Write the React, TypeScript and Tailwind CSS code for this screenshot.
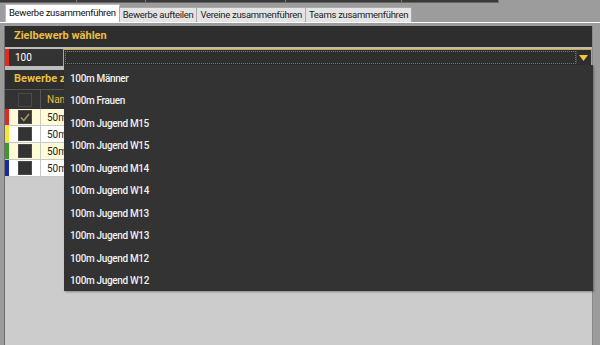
import React from "react";

const tabs = ["Bewerbe zusammenführen", "Bewerbe aufteilen", "Vereine zusammenführen", "Teams zusammenführen"];

const options = [
  "100m Männer",
  "100m Frauen",
  "100m Jugend M15",
  "100m Jugend W15",
  "100m Jugend M14",
  "100m Jugend W14",
  "100m Jugend M13",
  "100m Jugend W13",
  "100m Jugend M12",
  "100m Jugend W12",
];

const rows = [
  { color: "bg-[#e8281e]", bg: "bg-[#fffbd6]", checked: true },
  { color: "bg-[#f5e82a]", bg: "bg-white", checked: false },
  { color: "bg-[#3c9a2a]", bg: "bg-[#fffbd6]", checked: false },
  { color: "bg-[#1a2a9a]", bg: "bg-white", checked: false },
];

function Box({ checked }: { checked?: boolean }) {
  return (
    <div className="w-[14px] h-[14px] bg-[#333333] border border-[#4a4a4a] flex items-center justify-center">
      {checked && (
        <svg width="10" height="9" viewBox="0 0 10 9">
          <path d="M1 4.5 L3.8 7.5 L9 1" fill="none" stroke="#a8955a" strokeWidth="1.6" />
        </svg>
      )}
    </div>
  );
}

export default function App() {
  return (
    <div
      className="w-[600px] h-[345px] bg-[#9c9c9c] relative overflow-hidden flex flex-col"
      style={{ fontFamily: 'Roboto, "Open Sans", sans-serif' }}
    >
      {/* top toolbar remains */}
      <div className="h-[4px] flex shrink-0">
        {[77, 69, 140, 116, 97].map((w, i) => (
          <div key={i} className="h-[3px] bg-[#3a3a3a] border-r border-[#777] border-b border-b-[#666]" style={{ width: w }} />
        ))}
      </div>

      {/* tabs */}
      <div className="flex items-end pl-[5px] h-[18px] shrink-0">
        {tabs.map((t, i) => (
          <div
            key={t}
            className={
              i === 0
                ? "h-[18px] px-[3px] bg-white text-[9.5px] tracking-[-0.3px] text-[#111] flex items-center border border-b-0 border-[#bbb]"
                : "h-[15px] px-[3px] bg-[#e4e4e4] text-[9.5px] tracking-[-0.3px] text-[#222] flex items-center border border-b-0 border-[#aaa] -ml-px"
            }
          >
            {t}
          </div>
        ))}
      </div>
      <div className="h-px bg-white shrink-0" />

      {/* body */}
      <div className="flex flex-1 pt-[3px]">
        <div className="w-[5px] border-r border-[#6e6e6e]" />
        <div className="w-[587px] flex flex-col">
          <div className="h-[21px] bg-[#2e2e2e] flex items-center pl-[9px] text-[11px] font-bold text-[#e9bf3c]">
            Zielbewerb wählen
          </div>
          <div className="h-[2px] bg-[#bdbdbd]" />
          <div className="h-[17px] flex">
            <div className="w-[4px] bg-[#e8281e]" />
            <div className="w-[54px] bg-[#333333] text-white text-[10px] flex items-center pl-[6px]">100</div>
            <div className="flex-1 bg-[#2e2e2e] border border-[#c9a83a] p-px flex">
              <div className="flex-1 border border-dotted border-[#777]" />
              <div className="w-[14px] flex items-center justify-center border-l border-[#444]">
                <svg width="9" height="6" viewBox="0 0 9 6">
                  <path d="M0 0 H9 L4.5 6 Z" fill="#f2c53a" />
                </svg>
              </div>
            </div>
          </div>
          <div className="h-[4px] bg-[#bdbdbd]" />
          <div className="h-[19px] bg-[#2e2e2e] flex items-center pl-[9px] whitespace-nowrap text-[11px] font-bold text-[#e9bf3c]">
            Bewerbe zusammenführen
          </div>
          <div className="h-[20px] bg-[#333333] flex border-t border-[#555]">
            <div className="w-[36px] flex items-center justify-center border-r border-[#555] pl-[4px]">
              <Box />
            </div>
            <div className="flex items-center pl-[6px] text-[10px] text-[#e9bf3c]">Name</div>
          </div>
          {rows.map((r, i) => (
            <div key={i} className={`h-[17px] flex border-b border-[#c8c8c8] ${r.bg}`}>
              <div className={`w-[4px] ${r.color}`} />
              <div className="w-[32px] flex items-center justify-center border-r border-[#c8c8c8]">
                <Box checked={r.checked} />
              </div>
              <div className="flex items-center pl-[6px] text-[10px] text-[#222]">50m</div>
            </div>
          ))}
          <div className="flex-1 bg-[#cccccc]" />
        </div>
        <div className="flex-1 border-l border-[#8a8a8a]" />
      </div>

      {/* dropdown list */}
      <div className="absolute left-[64px] top-[65px] w-[529px] h-[226px] bg-[#333333] shadow-[1px_1px_2px_rgba(0,0,0,0.35)] pt-[2px]">
        {options.map((o) => (
          <div key={o} className="h-[22.5px] flex items-center pl-[6px] text-[10px] tracking-[-0.35px] font-medium text-[#f0f0f0]">
            {o}
          </div>
        ))}
      </div>
    </div>
  );
}
